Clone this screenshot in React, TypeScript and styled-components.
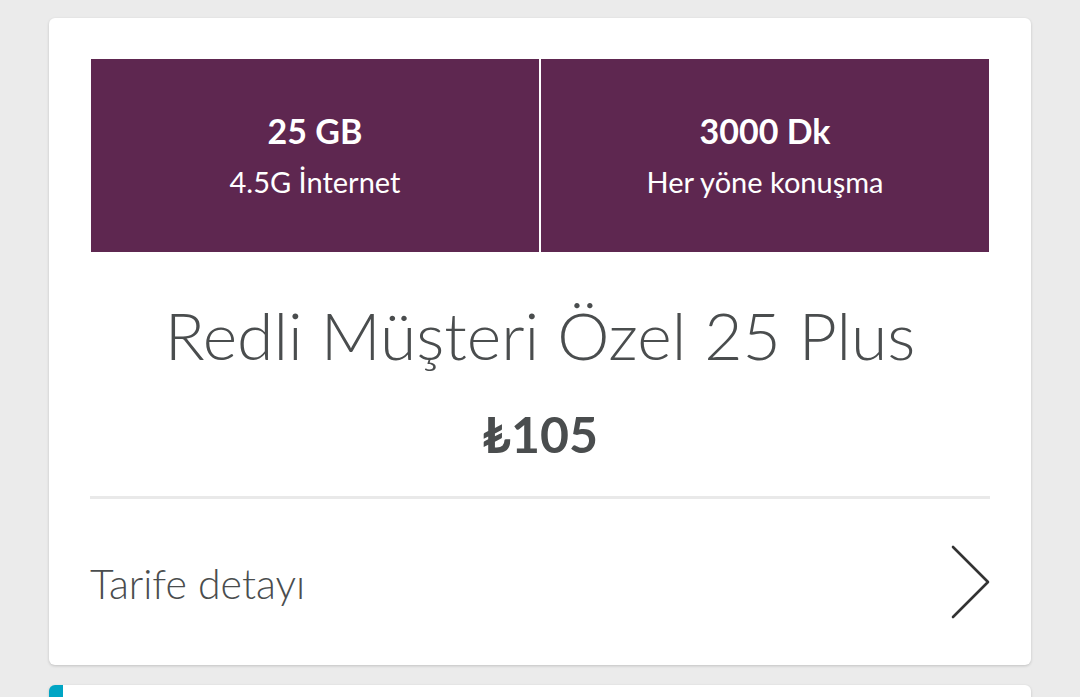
import React from "react";
import styled, { createGlobalStyle } from "styled-components";

const Global = createGlobalStyle`
  html, body { margin: 0; padding: 0; background: #ebebeb; }
  body { font-family: Lato, "Noto Sans", sans-serif; overflow: hidden; }
`;

const Page = styled.div`
  display: flex;
  flex-direction: column;
  gap: 20px;
  padding: 18px 49px 0;
  height: 697px;
  box-sizing: border-box;
  overflow: hidden;
`;

const Card = styled.div`
  background: #fff;
  border-radius: 6px;
  box-shadow: 0 1px 3px rgba(0, 0, 0, 0.18);
  padding: 41px 42px 0;
  display: flex;
  flex-direction: column;
  flex-shrink: 0;
`;

const Stats = styled.div`
  display: grid;
  grid-template-columns: 1fr 1fr;
  column-gap: 2px;
  height: 193px;
`;

const Stat = styled.div`
  background: #5e2750;
  color: #fff;
  display: flex;
  flex-direction: column;
  align-items: center;
  padding-top: 52px;
  box-sizing: border-box;
`;

const StatValue = styled.div`
  font-weight: 700;
  font-size: 34px;
  line-height: 40px;
`;

const StatLabel = styled.div`
  font-weight: 400;
  font-size: 29px;
  line-height: 34px;
  margin-top: 14px;
`;

const Title = styled.h1`
  margin: 47px 0 0;
  text-align: center;
  font-weight: 300;
  font-size: 66px;
  line-height: 72px;
  color: #4a4d4e;
`;

const Price = styled.div`
  margin-top: 35px;
  text-align: center;
  font-weight: 700;
  font-size: 50px;
  line-height: 56px;
  color: #4a4d4e;
`;

const Divider = styled.hr`
  margin: 34px -1px 0;
  border: none;
  height: 3px;
  background: #e9e9e9;
`;

const DetailRow = styled.div`
  height: 166px;
  display: flex;
  align-items: center;
  justify-content: space-between;
`;

const DetailText = styled.span`
  font-weight: 300;
  font-size: 41px;
  color: #4a4d4e;
  margin-left: -1px;
  margin-top: 2px;
`;

const Chevron = styled.svg`
  width: 42px;
  height: 76px;
  margin-right: -2px;
`;

const NextCard = styled.div`
  background: #fff;
  border-radius: 6px;
  border-left: 14px solid #00a5c4;
  height: 80px;
  box-shadow: 0 1px 3px rgba(0, 0, 0, 0.18);
  flex-shrink: 0;
`;

export default function App() {
  return (
    <>
      <Global />
      <Page>
        <Card>
          <Stats>
            <Stat>
              <StatValue>25 GB</StatValue>
              <StatLabel>4.5G İnternet</StatLabel>
            </Stat>
            <Stat>
              <StatValue>3000 Dk</StatValue>
              <StatLabel>Her yöne konuşma</StatLabel>
            </Stat>
          </Stats>
          <Title>Redli Müşteri Özel 25 Plus</Title>
          <Price>₺105</Price>
          <Divider />
          <DetailRow>
            <DetailText>Tarife detayı</DetailText>
            <Chevron viewBox="0 0 42 76" fill="none">
              <path d="M4 3 L39 38 L4 73" stroke="#333" strokeWidth="2.6" strokeLinecap="round" strokeLinejoin="round" />
            </Chevron>
          </DetailRow>
        </Card>
        <NextCard />
      </Page>
    </>
  );
}
